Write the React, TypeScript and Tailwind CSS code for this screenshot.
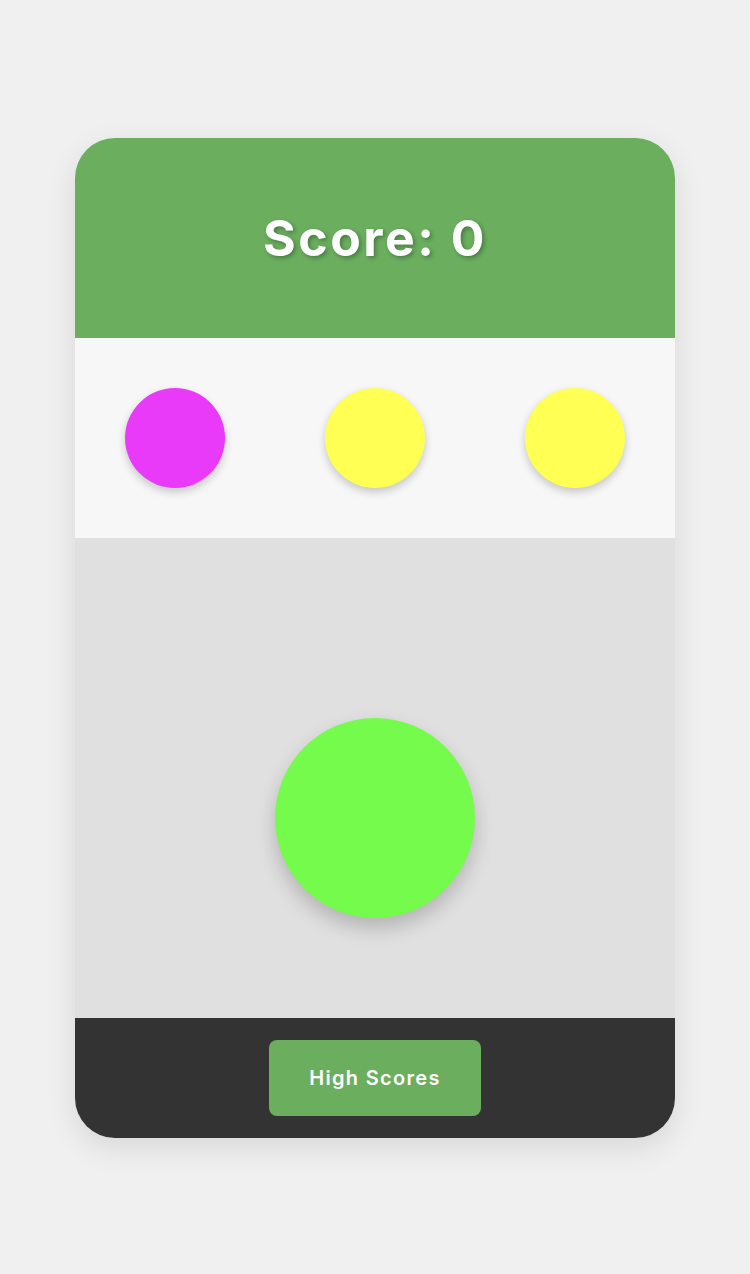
export default function App() {
  const targets = ['#e93af9', '#ffff54', '#ffff54'];

  return (
    <div
      className="min-h-[1274px] w-full bg-[#f0f0f0] flex justify-center pt-[138px]"
      style={{ fontFamily: '"Inter", "Noto Sans", sans-serif' }}
    >
      <div className="w-[600px] h-[1000px] rounded-[40px] overflow-hidden flex flex-col shadow-[0_10px_30px_rgba(0,0,0,0.1)]">
        {/* Header */}
        <div className="h-[200px] bg-[#6aae5e] flex items-center justify-center">
          <h1 className="text-white text-[50px] font-bold leading-none tracking-[2.5px] [text-shadow:2px_2px_4px_rgba(0,0,0,0.3)]">
            Score: 0
          </h1>
        </div>

        {/* Target colours */}
        <div className="h-[200px] bg-[#f7f7f7] flex items-center justify-around">
          {targets.map((c, i) => (
            <div
              key={i}
              className="w-[100px] h-[100px] rounded-full shadow-[0_4px_8px_rgba(0,0,0,0.2)]"
              style={{ backgroundColor: c }}
            />
          ))}
        </div>

        {/* Play area */}
        <div className="h-[480px] bg-[#e0e0e0] flex justify-center pt-[180px]">
          <div className="w-[200px] h-[200px] rounded-full bg-[#75fb4c] shadow-[0_10px_20px_rgba(0,0,0,0.2)]" />
        </div>

        {/* Footer */}
        <div className="flex-1 bg-[#333333] flex items-center justify-center">
          <button className="w-[212px] h-[76px] rounded-[8px] bg-[#6aae5e] text-white text-[20px] font-semibold tracking-[1.3px]">
            High Scores
          </button>
        </div>
      </div>
    </div>
  );
}
